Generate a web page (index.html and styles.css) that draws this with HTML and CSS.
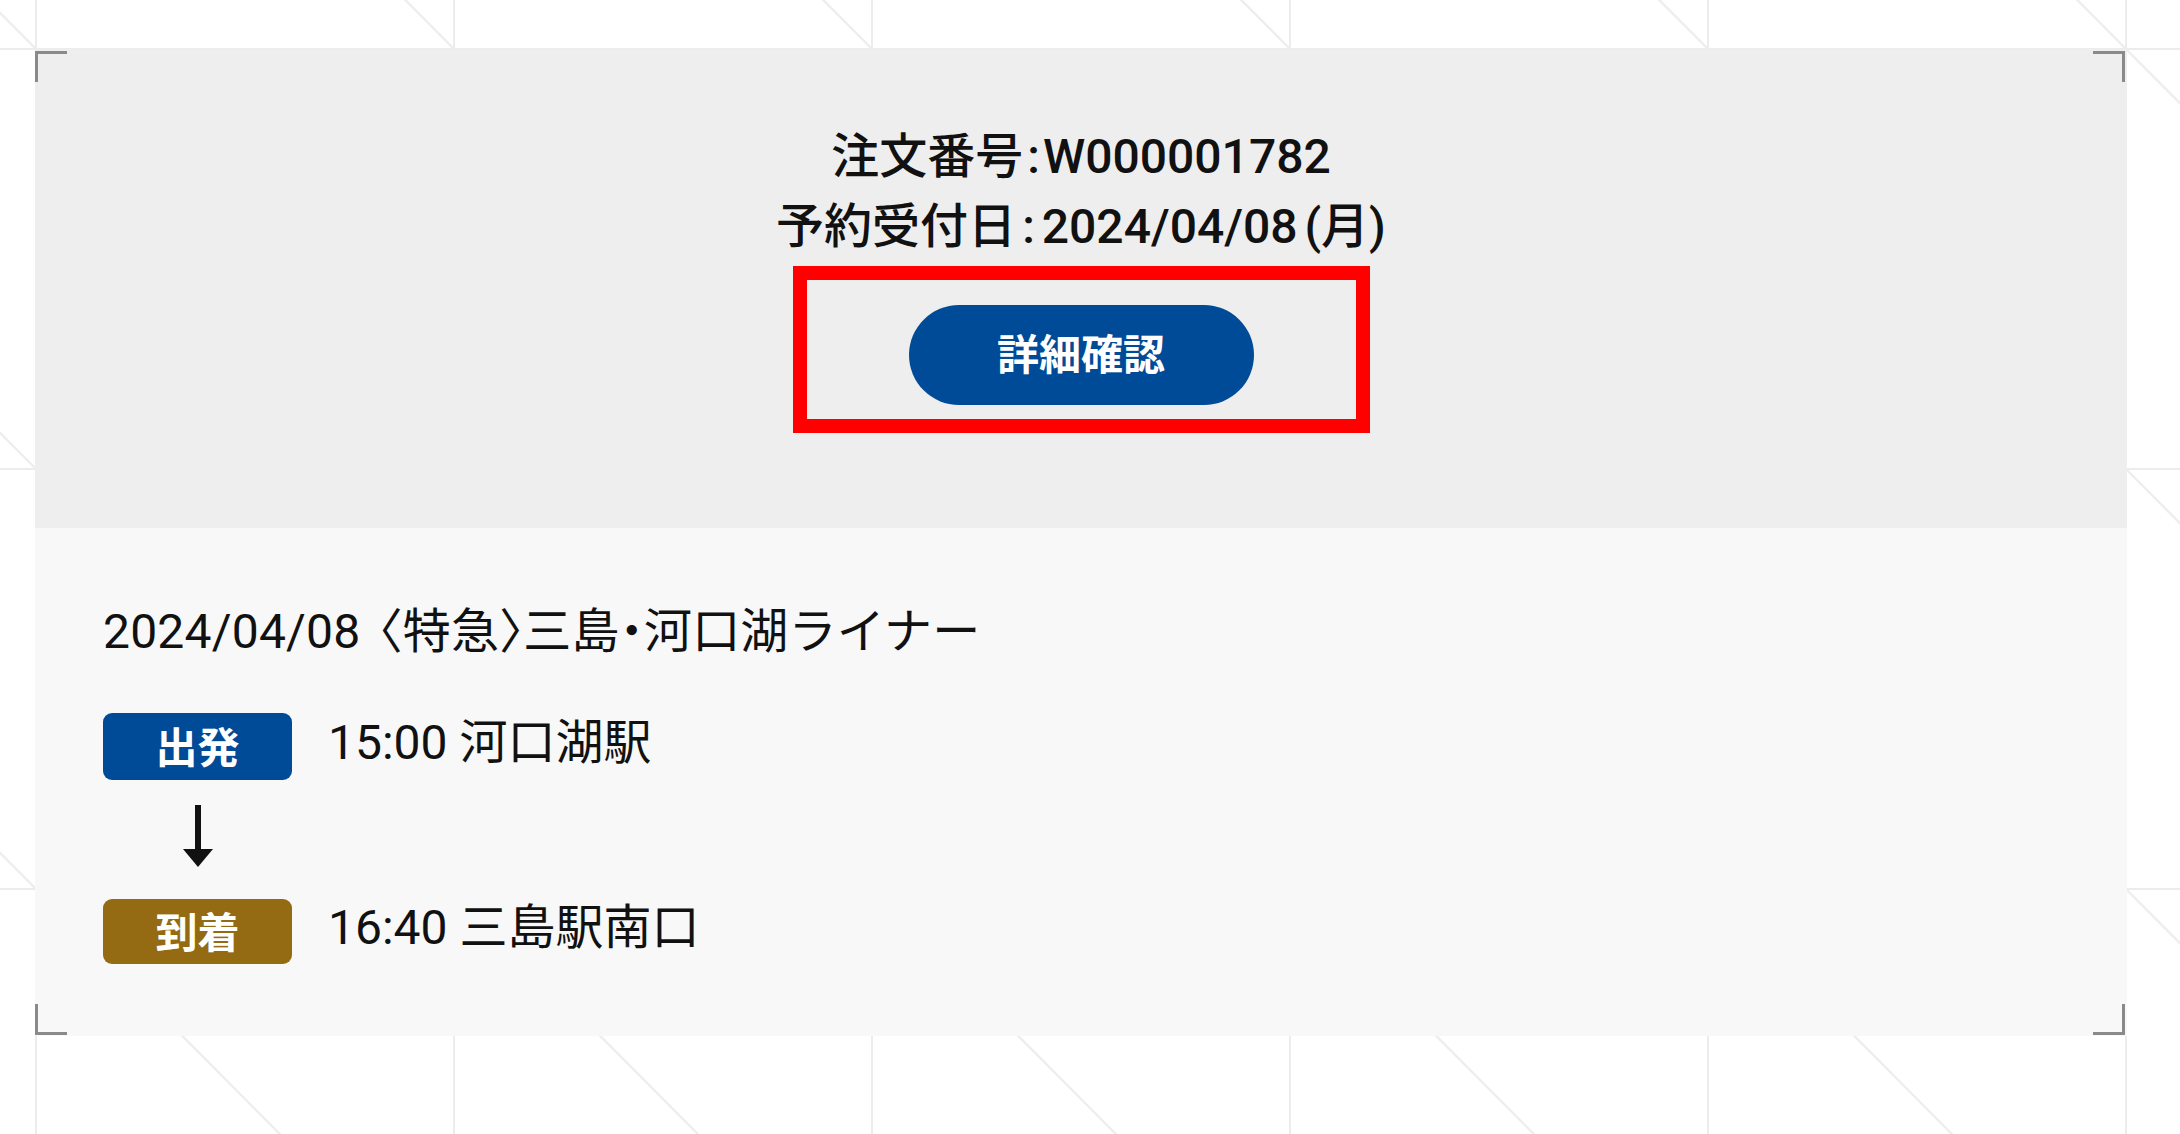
FILE: index.html
```html
<!DOCTYPE html>
<html lang="ja">
<head>
<meta charset="utf-8">
<title>予約詳細</title>
<link rel="stylesheet" href="styles.css">
</head>
<body>
<div class="card">
  <span class="corner tl"></span>
  <span class="corner tr"></span>
  <span class="corner bl"></span>
  <span class="corner br"></span>
  <section class="summary">
    <p class="order-line">注文番号<span class="sep">:</span>W000001782</p>
    <p class="order-line">予約受付日<span class="sep wide">:</span>2024/04/08<span class="dow">(月)</span></p>
    <div class="action">
      <a class="detail-btn" href="#">詳細確認</a>
      <span class="highlight"></span>
    </div>
  </section>
  <section class="trip">
    <h2 class="trip-title">2024/04/08 〈特急〉三島・河口湖ライナー</h2>
    <div class="stop">
      <span class="badge dep">出発</span>
      <span class="stop-text">15:00 河口湖駅</span>
    </div>
    <div class="arrow">
      <svg width="32" height="62" viewBox="0 0 32 62"><rect x="13" y="0" width="6" height="47" fill="#111"/><polygon points="1,44 31,44 16,62" fill="#111"/></svg>
    </div>
    <div class="stop">
      <span class="badge arr">到着</span>
      <span class="stop-text">16:40 三島駅南口</span>
    </div>
  </section>
</div>
</body>
</html>
```
FILE: styles.css
```css
html, body {
  margin: 0;
  padding: 0;
}
body {
  width: 2180px;
  height: 1134px;
  overflow: hidden;
  background-color: #ffffff;
  background-image:
    linear-gradient(90deg, #ececec 0, #ececec 2px, transparent 2px),
    linear-gradient(180deg, #ececec 0, #ececec 2px, transparent 2px),
    linear-gradient(to top right, transparent calc(50% - 1.5px), #eeeeee calc(50% - 1px), #eeeeee calc(50% + 1px), transparent calc(50% + 1.5px));
  background-size: 418px 420px;
  background-position: 35px 48px;
  font-family: "Roboto", "Noto Sans CJK JP", sans-serif;
  color: #111;
}
.card {
  position: relative;
  margin: 49px 0 0 35px;
  width: 2092px;
  height: 987px;
  display: flex;
  flex-direction: column;
}
.corner {
  position: absolute;
  width: 29px;
  height: 28px;
  border: 0 solid #8a8a8a;
  z-index: 2;
}
.corner.tl { top: 2px; left: 0; border-top-width: 3px; border-left-width: 3px; }
.corner.tr { top: 2px; right: 2px; border-top-width: 3px; border-right-width: 3px; }
.corner.bl { bottom: 1px; left: 0; border-bottom-width: 3px; border-left-width: 3px; }
.corner.br { bottom: 1px; right: 2px; border-bottom-width: 3px; border-right-width: 3px; }

.summary {
  background: #eeeeee;
  height: 479px;
  box-sizing: border-box;
  padding-top: 73px;
  text-align: center;
}
.order-line {
  margin: 0;
  font-size: 48px;
  line-height: 70px;
  font-weight: 500;
}
.sep {
  margin: 0 3px 0 4px;
}
.sep.wide {
  margin: 0 7px 0 6px;
}
.dow {
  margin-left: 7px;
}
.action {
  position: relative;
  width: 345px;
  height: 100px;
  margin: 43px auto 0;
}
.detail-btn {
  display: flex;
  align-items: center;
  justify-content: center;
  width: 345px;
  height: 100px;
  border-radius: 50px;
  background: #004b98;
  color: #ffffff;
  text-decoration: none;
  font-family: "Noto Sans CJK JP", sans-serif;
  font-weight: 700;
  font-size: 42px;
  line-height: 1;
  padding-bottom: 6px;
  box-sizing: border-box;
}
.highlight {
  position: absolute;
  left: -116px;
  top: -39px;
  width: 577px;
  height: 167px;
  box-sizing: border-box;
  border: 14px solid #ff0000;
  pointer-events: none;
}

.trip {
  background: #f8f8f8;
  flex: 1;
  box-sizing: border-box;
  padding: 69px 0 0 68px;
}
.trip-title {
  margin: 0 0 44px;
  font-size: 48px;
  line-height: 70px;
  font-weight: 400;
  font-feature-settings: "halt";
  letter-spacing: 0.2px;
  word-spacing: 6px;
}
.stop {
  display: flex;
  align-items: center;
  gap: 36px;
}
.badge {
  display: flex;
  align-items: center;
  justify-content: center;
  width: 189px;
  height: 67px;
  border-radius: 9px;
  color: #ffffff;
  font-family: "Noto Sans CJK JP", sans-serif;
  font-weight: 700;
  font-size: 42px;
  line-height: 1;
  padding-bottom: 3px;
  box-sizing: border-box;
}
.badge.dep { background: #004b98; }
.badge.arr { background: #946a12; height: 65px; }
.stop-text {
  font-size: 48px;
  line-height: 64px;
  padding-bottom: 6px;
}
.arrow {
  width: 189px;
  height: 62px;
  margin: 24px 0 29px;
  display: flex;
  justify-content: center;
}
.arrow svg {
  display: block;
}
```
